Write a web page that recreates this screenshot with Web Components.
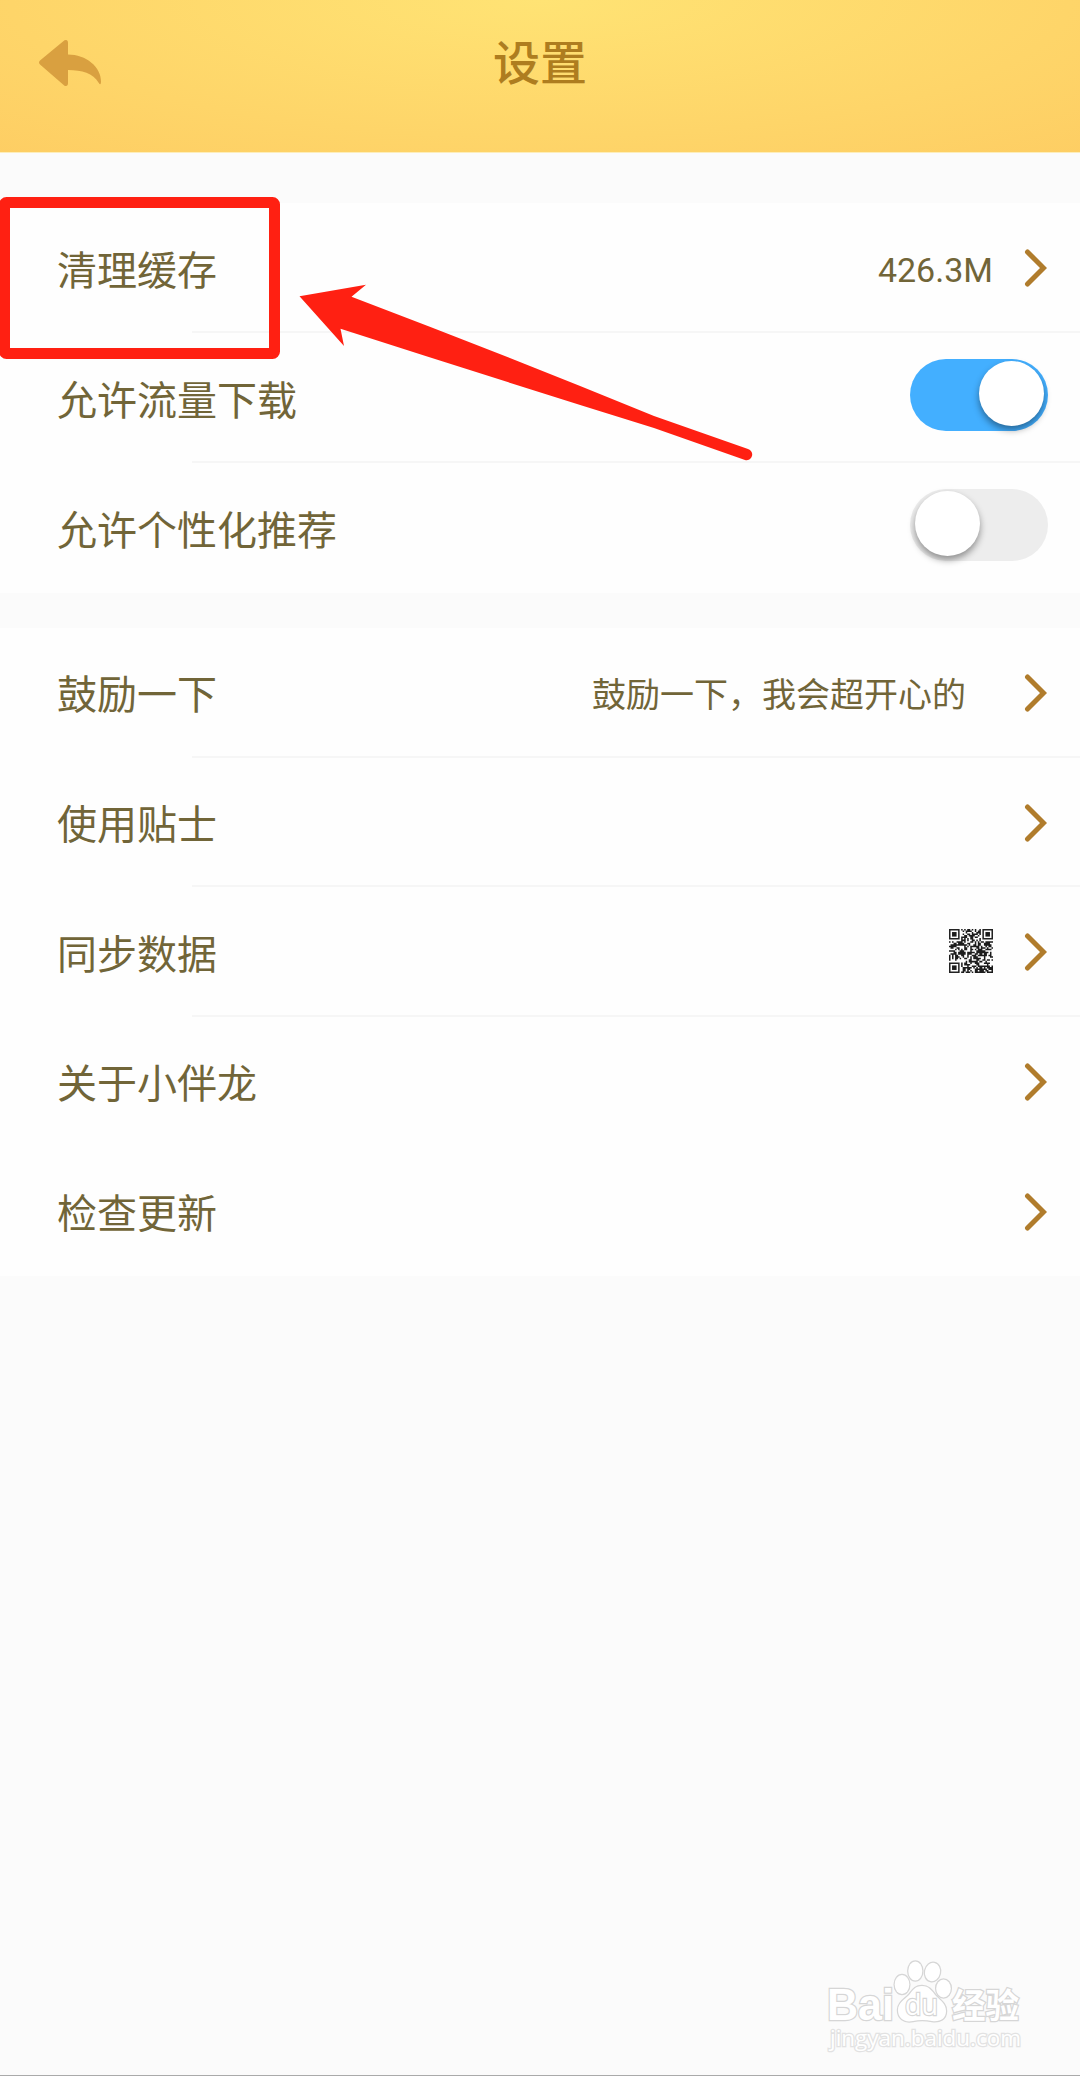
<!DOCTYPE html>
<html lang="zh-CN">
<head>
  <meta charset="utf-8">
  <title>设置</title>
  <style>
    body {
      margin: 0;
      background: #fbfbfb;
      color: #716538;
      font-family: Roboto, "Noto Sans CJK SC", sans-serif;
    }

    .more {
      --row-height: 129.700px;
      --gap: 35px;
    }
  </style>
</head>
<body>
  <settings-page>
    <nav-header>设置</nav-header>
    <settings-group>
      <settings-row arrow label="清理缓存">426.3M</settings-row>
      <settings-row label="允许流量下载"><toggle-switch on></toggle-switch></settings-row>
      <settings-row label="允许个性化推荐"><toggle-switch></toggle-switch></settings-row>
    </settings-group>
    <settings-group class="more">
      <settings-row arrow wide label="鼓励一下">鼓励一下，我会超开心的</settings-row>
      <settings-row arrow label="使用贴士"></settings-row>
      <settings-row arrow label="同步数据"><qr-icon></qr-icon></settings-row>
      <settings-row arrow plain label="关于小伴龙"></settings-row>
      <settings-row arrow label="检查更新"></settings-row>
    </settings-group>
    <guide-mark slot="overlay"></guide-mark>
    <baidu-mark slot="overlay"></baidu-mark>
  </settings-page>

  <script>
    class SettingsPage extends HTMLElement {
      connectedCallback() {
        this.attachShadow({mode: 'open'}).innerHTML = `
          <style>
            :host {
              display: block;
              position: relative;
              box-sizing: border-box;
              width: 1080px;
              height: 2076px;
              overflow: hidden;
              background: #fbfbfb;
              border-bottom: 1px solid #aaa;
            }

            main {
              display: flex;
              flex-direction: column;
            }
          </style>
          <main><slot></slot></main>
          <slot name="overlay"></slot>
        `;
      }
    }

    class NavHeader extends HTMLElement {
      connectedCallback() {
        this.attachShadow({mode: 'open'}).innerHTML = `
          <style>
            :host {
              display: grid;
              grid-template-columns: 140px 1fr 140px;
              align-items: center;
              box-sizing: border-box;
              height: 153px;
              padding-bottom: 26px;
              border-bottom: 1px solid #fdeebb;
              background: radial-gradient(ellipse 98% 180% at 50% 0, #ffe374, #fdc75e);
            }

            svg {
              display: block;
              margin: 0 0 0 36px;
            }

            h1 {
              margin: 0;
              padding-top: 2px;
              text-align: center;
              font-size: 47px;
              line-height: 60px;
              font-weight: 500;
              color: #ae7d1f;
            }
          </style>
          <svg width="68" height="52" viewBox="36 36 68 52">
            <path fill="#d9a040" d="M40 59.500 L64.500 39.300 Q68 38 68 42 V53.500 C86 53.500 101.500 66 101 81 Q100.700 85 98.800 82 C93 72 82 69 68 69 V82 Q68 86 64.500 84.700 L40 63.500 Q38 61.500 40 59.500 Z"/>
          </svg>
          <h1><slot></slot></h1>
        `;
      }
    }

    class SettingsGroup extends HTMLElement {
      connectedCallback() {
        this.attachShadow({mode: 'open'}).innerHTML = `
          <style>
            :host {
              display: block;
              margin-top: var(--gap, 50px);
              background: #fefefe;
            }
          </style>
          <slot></slot>
        `;
      }
    }

    class SettingsRow extends HTMLElement {
      connectedCallback() {
        const arrow = this.hasAttribute('arrow') ? `
          <svg width="24" height="40" viewBox="0 0 24 40">
            <path d="M4.500 4 L20.500 20 L4.500 36" fill="none" stroke="#b07c2c" stroke-width="5" stroke-linecap="round"/>
          </svg>` : '';

        this.attachShadow({mode: 'open'}).innerHTML = `
          <style>
            :host {
              display: flex;
              align-items: center;
              box-sizing: border-box;
              height: var(--row-height, 130px);
              padding: 0 33px 0 57px;
              background: linear-gradient(#f6f6f6, #f6f6f6) 192px 100% / 100% 2px no-repeat;
            }

            :host(:last-of-type), :host([plain]) {
              background: none;
            }

            .label {
              flex: 1;
              font-size: 40px;
              line-height: 60px;
              padding-top: 7px;
            }

            .value {
              font-size: 34px;
              line-height: 50px;
              padding-top: 4px;
            }

            :host([arrow]) .value {
              margin-right: 30px;
            }

            :host([wide]) .value {
              margin-right: 57px;
            }

            :host(:not([arrow])) .value {
              margin-right: -1px;
              padding: 0 0 7px;
            }
          </style>
          <span class="label">${this.getAttribute('label')}</span>
          <span class="value"><slot></slot></span>
          ${arrow}
        `;
      }
    }

    class ToggleSwitch extends HTMLElement {
      connectedCallback() {
        this.attachShadow({mode: 'open'}).innerHTML = `
          <style>
            :host {
              display: flex;
              box-sizing: border-box;
              width: 138px;
              height: 72px;
              padding: 2px 4px 2px 5px;
              border-radius: 36px;
              background: #ededed;
            }

            :host([on]) {
              justify-content: flex-end;
              background: #43afff;
            }

            span {
              width: 65px;
              height: 65px;
              border-radius: 50%;
              background: #fff;
              box-shadow: 0 4px 7px rgba(0, 0, 0, .4);
            }
          </style>
          <span></span>
        `;
      }
    }

    class QrIcon extends HTMLElement {
      connectedCallback() {
        const size = 29;
        let path = '';
        let seed = 17;
        for (let y = 0; y < size; y++) {
          for (let x = 0; x < size; x++) {
            seed = (seed * 1103515245 + 12345) % 2147483648;
            // keep the three finder corners free
            const corner = (x < 8 && (y < 8 || y > 20)) || (x > 20 && y < 8);
            if (!corner && seed / 2147483648 < .54) path += `M${x} ${y}h1v1h-1z`;
          }
        }
        const finder = (x, y) => `
          <path d="M${x + .5} ${y + .5}h6v6h-6z" fill="none" stroke="#222"/>
          <path d="M${x + 2} ${y + 2}h3v3h-3z"/>`;

        this.attachShadow({mode: 'open'}).innerHTML = `
          <style>
            :host {
              display: block;
              padding-bottom: 6px;
            }

            svg {
              display: block;
            }
          </style>
          <svg width="44" height="44" viewBox="0 0 29 29" fill="#1c1c1c">
            <path d="${path}"/>
            ${finder(0, 0)}${finder(22, 0)}${finder(0, 22)}
          </svg>
        `;
      }
    }

    // red frame and arrow lying over the first row
    class GuideMark extends HTMLElement {
      connectedCallback() {
        this.attachShadow({mode: 'open'}).innerHTML = `
          <style>
            :host {
              position: absolute;
              left: 0;
              top: 190px;
            }

            svg {
              display: block;
            }
          </style>
          <svg width="770" height="280" viewBox="0 190 770 280">
            <rect x="4.500" y="202.500" width="270" height="151" rx="2" fill="none" stroke="#ff2012" stroke-width="11" stroke-linejoin="round"/>
            <path fill="#ff2012" d="M299.500 296.300 L366 284.700 L351.500 296.700 Q500 353 654 416 L748 449 A5.600 5.600 0 0 1 745 460 L654 428 Q500 380 340.500 328.700 L344 346 Z"/>
          </svg>
        `;
      }
    }

    class BaiduMark extends HTMLElement {
      connectedCallback() {
        this.attachShadow({mode: 'open'}).innerHTML = `
          <style>
            :host {
              position: absolute;
              left: 820px;
              top: 1950px;
            }

            svg {
              display: block;
            }

            g {
              fill: #fff;
              stroke: #d6d6d6;
              stroke-width: 2.500px;
              paint-order: stroke;
            }

            .bai {
              font: bold 44px "Liberation Sans", sans-serif;
            }

            .du {
              font: 30px "Open Sans", sans-serif;
            }

            .cn {
              font: bold 34px "Noto Sans CJK SC", sans-serif;
            }

            .url {
              font: 22px "Open Sans", sans-serif;
              stroke: #e2e2e2;
            }
          </style>
          <svg width="220" height="110" viewBox="820 1950 220 110">
            <g>
              <text class="bai" x="827" y="2020" textLength="67" lengthAdjust="spacingAndGlyphs">Bai</text>
              <path d="M922 1986 C929 1986 932 1991 936 1996 C941 2001 946 2004 946 2011 C946 2019 940 2022 932 2021 Q922 2019 913 2021 C904 2023 898 2018 898 2010 C898 2003 904 2000 909 1995 C913 1990 915 1986 922 1986 Z"/>
              <ellipse cx="902" cy="1984.500" rx="7.300" ry="9.500"/>
              <ellipse cx="915.300" cy="1971" rx="7" ry="9.500"/>
              <ellipse cx="932.500" cy="1972" rx="7.500" ry="9.300" transform="rotate(12 932.500 1972)"/>
              <ellipse cx="943.500" cy="1988.500" rx="7.300" ry="9"/>
              <text class="du" x="905" y="2015" textLength="33" lengthAdjust="spacingAndGlyphs">du</text>
              <text class="cn" x="952" y="2018" textLength="67" lengthAdjust="spacingAndGlyphs">经验</text>
              <text class="url" x="830" y="2046" textLength="191" lengthAdjust="spacingAndGlyphs">jingyan.baidu.com</text>
            </g>
          </svg>
        `;
      }
    }

    customElements.define('settings-page', SettingsPage);
    customElements.define('nav-header', NavHeader);
    customElements.define('settings-group', SettingsGroup);
    customElements.define('settings-row', SettingsRow);
    customElements.define('toggle-switch', ToggleSwitch);
    customElements.define('qr-icon', QrIcon);
    customElements.define('guide-mark', GuideMark);
    customElements.define('baidu-mark', BaiduMark);
  </script>
</body>
</html>
